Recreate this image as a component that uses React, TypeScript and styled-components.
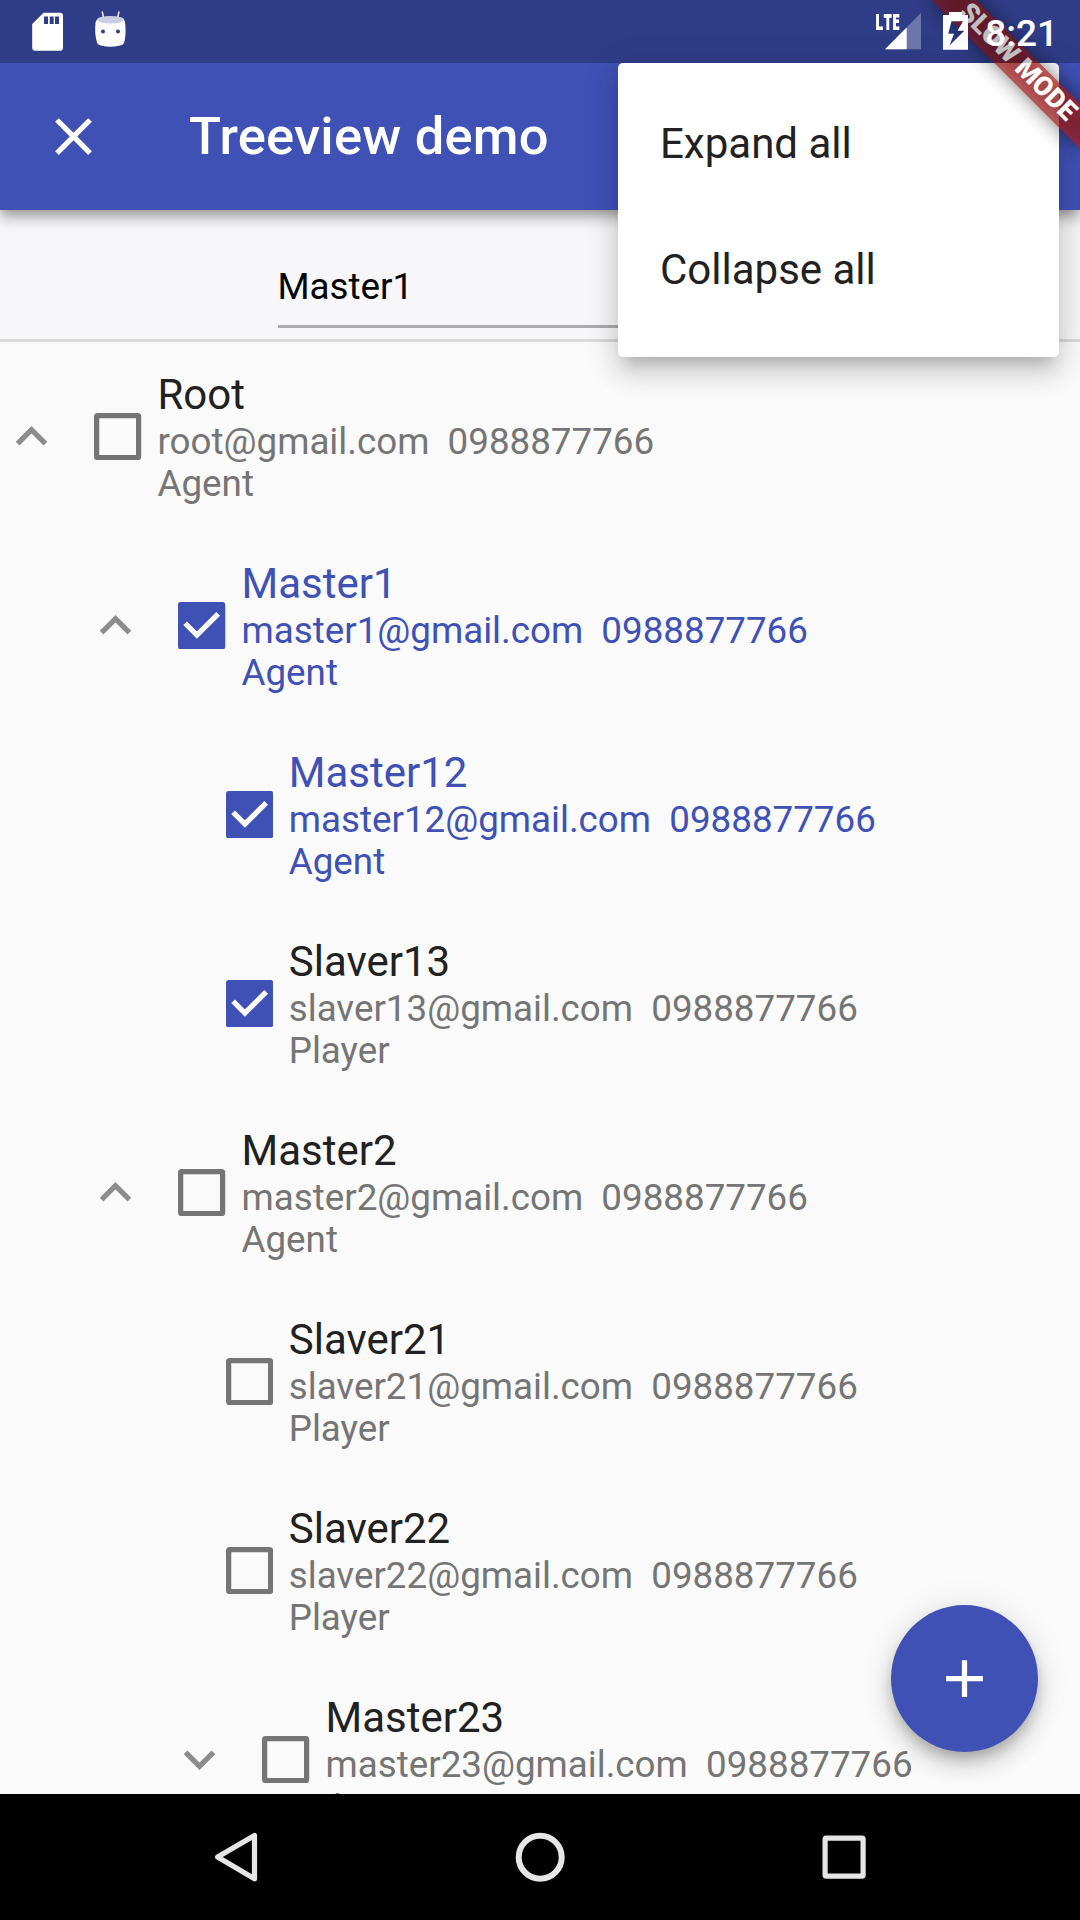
import React from "react";
import styled, { createGlobalStyle } from "styled-components";

const indigo = "#3f51b5";

const GlobalStyle = createGlobalStyle`
  *, *::before, *::after { box-sizing: border-box; }
  body {
    margin: 0;
    background: #000;
    font-family: Roboto, "Liberation Sans", sans-serif;
  }
`;

const Screen = styled.div`
  position: relative;
  display: flex;
  flex-direction: column;
  width: 1080px;
  height: 1920px;
  overflow: hidden;
  background: #fafafa;
`;

const Header = styled.header`
  position: relative;
  z-index: 1;
  flex: none;
  height: 210px;
  padding-top: 63px;
  background: ${indigo};
  box-shadow: 0 5px 10px -2px rgba(0, 0, 0, 0.2), 0 10px 13px rgba(0, 0, 0, 0.16), 0 3px 16px rgba(0, 0, 0, 0.12);
`;

const Toolbar = styled.div`
  display: flex;
  align-items: center;
  height: 147px;
  padding-left: 42px;
`;

const Icon = styled.svg`
  display: block;
  flex: none;
  width: 63px;
  height: 63px;
`;

const Title = styled.h1`
  margin: 0 0 2px 84px;
  color: #fff;
  font-size: 52.5px;
  font-weight: 500;
  letter-spacing: 0.22px;
  line-height: 62px;
`;

const SearchPanel = styled.div`
  display: flex;
  flex: none;
  justify-content: center;
  height: 132px;
  padding-top: 43px;
  background: #f7f7f9;
  border-bottom: 3px solid #dadada;
`;

const SearchField = styled.div`
  width: 525px;
  height: 75px;
  padding-top: 12px;
  border-bottom: 3px solid #acacac;
  color: #000;
  font-size: 36.75px;
  line-height: 43px;
`;

const Tree = styled.main`
  flex: 1;
  min-height: 0;
  overflow: hidden;
`;

const Row = styled.div<{ $depth: number }>`
  display: flex;
  align-items: center;
  height: 189px;
  padding-left: ${(p) => p.$depth * 84}px;
`;

const Toggle = styled.div<{ $leaf: boolean }>`
  flex: none;
  width: ${(p) => (p.$leaf ? 26.25 : 63)}px;
  margin-right: 31.4px;
`;

const CheckIcon = styled.svg`
  display: block;
  flex: none;
  width: 47.25px;
  height: 47.25px;
  margin-right: 15.85px;
`;

const Details = styled.div<{ $active: boolean }>`
  display: flex;
  flex-direction: column;
  padding-top: 2px;
  color: ${(p) => (p.$active ? indigo : "#757575")};
  font-size: 36.75px;
  line-height: 42px;
  white-space: pre;
`;

const Name = styled.div<{ $active: boolean }>`
  margin-bottom: 1px;
  color: ${(p) => (p.$active ? indigo : "#212121")};
  font-size: 42px;
  line-height: 50px;
`;

const NavBar = styled.nav`
  position: relative;
  display: flex;
  flex: none;
  align-items: center;
  justify-content: center;
  gap: 241px;
  height: 126px;
  background: #000;
`;

const Fab = styled.button`
  position: absolute;
  right: 42px;
  bottom: 168px;
  display: flex;
  align-items: center;
  justify-content: center;
  width: 147px;
  height: 147px;
  padding: 0;
  border: 0;
  border-radius: 50%;
  background: ${indigo};
  box-shadow: 0 8px 13px -3px rgba(0, 0, 0, 0.2), 0 14px 22px rgba(0, 0, 0, 0.14), 0 3px 34px rgba(0, 0, 0, 0.1);
`;

const Menu = styled.div`
  position: absolute;
  z-index: 2;
  top: 63px;
  right: 21px;
  width: 441px;
  height: 294px;
  padding: 18px 42px 24px;
  border-radius: 5px;
  background: #fff;
  box-shadow: 0 13px 13px -8px rgba(0, 0, 0, 0.16), 0 16px 26px 2px rgba(0, 0, 0, 0.12), 0 6px 36px 4px rgba(0, 0, 0, 0.09);
`;

const MenuItem = styled.div`
  height: 126px;
  color: #212121;
  font-size: 42px;
  line-height: 126px;
`;

const Ribbon = styled.div`
  position: absolute;
  z-index: 3;
  top: 47.35px;
  left: 911.9px;
  width: 210px;
  height: 31.5px;
  transform: rotate(45deg);
`;

const RibbonShadow = styled.div`
  position: absolute;
  inset: 0;
  background: rgba(0, 0, 0, 0.5);
  filter: blur(10px);
`;

const RibbonLabel = styled.div`
  position: absolute;
  inset: 0;
  background: rgba(183, 28, 28, 0.627);
  color: #fff;
  font-size: 26.8px;
  font-weight: 900;
  line-height: 28px;
  text-align: center;
  white-space: nowrap;
`;

const StatusBar = styled.div`
  position: absolute;
  z-index: 4;
  top: 0;
  left: 0;
  display: flex;
  justify-content: space-between;
  width: 1080px;
  height: 63px;
  padding: 0 22px 0 24px;
  background: rgba(0, 0, 0, 0.25);
`;

const StatusGroup = styled.div`
  display: flex;
  align-items: flex-start;
`;

const StatusIcon = styled.svg<{ $w: number }>`
  display: block;
  flex: none;
  width: ${(p) => p.$w}px;
  height: 63px;
`;

const NetworkType = styled.span`
  width: 10px;
  margin-top: 10px;
  color: #fff;
  font-family: "Open Sans", Roboto, sans-serif;
  font-size: 23px;
  font-weight: 800;
  line-height: 22px;
  transform: scaleX(0.63);
  transform-origin: left;
`;

const Clock = styled.span`
  margin-left: 17px;
  color: #fff;
  font-size: 37px;
  font-weight: 500;
  line-height: 68px;
`;

type Node = {
  name: string;
  role: string;
  depth: number;
  toggle?: "open" | "closed";
  checked?: boolean;
  active?: boolean;
};

const nodes: Node[] = [
  { name: "Root", role: "Agent", depth: 0, toggle: "open" },
  { name: "Master1", role: "Agent", depth: 1, toggle: "open", checked: true, active: true },
  { name: "Master12", role: "Agent", depth: 2, checked: true, active: true },
  { name: "Slaver13", role: "Player", depth: 2, checked: true },
  { name: "Master2", role: "Agent", depth: 1, toggle: "open" },
  { name: "Slaver21", role: "Player", depth: 2 },
  { name: "Slaver22", role: "Player", depth: 2 },
  { name: "Master23", role: "Agent", depth: 2, toggle: "closed" },
];

function Checkbox({ checked }: { checked?: boolean }) {
  return (
    <CheckIcon viewBox="0 0 18 18">
      {checked ? (
        <>
          <rect width="18" height="18" rx="1" fill={indigo} />
          <path d="M2.7 8.1 7.2 12.6 15.3 4.5" fill="none" stroke="#fff" strokeWidth="2" />
        </>
      ) : (
        <rect x="1" y="1" width="16" height="16" rx="0.4" fill="none" stroke="#757575" strokeWidth="2" />
      )}
    </CheckIcon>
  );
}

function TreeRow({ node }: { node: Node }) {
  const active = !!node.active;
  return (
    <Row $depth={node.depth}>
      <Toggle $leaf={!node.toggle}>
        {node.toggle && (
          <Icon viewBox="0 0 24 24" fill="#8c8c8c">
            {node.toggle === "open" ? (
              <path d="M12 8l-6 6 1.41 1.41L12 10.83l4.59 4.58L18 14z" />
            ) : (
              <path d="M16.59 8.59L12 13.17 7.41 8.59 6 10l6 6 6-6z" />
            )}
          </Icon>
        )}
      </Toggle>
      <Checkbox checked={node.checked} />
      <Details $active={active}>
        <Name $active={active}>{node.name}</Name>
        <div>{`${node.name.toLowerCase()}@gmail.com  0988877766`}</div>
        <div>{node.role}</div>
      </Details>
    </Row>
  );
}

export default function App() {
  return (
    <Screen>
      <GlobalStyle />
      <Header>
        <Toolbar>
          <Icon viewBox="0 0 24 24" fill="#fff">
            <path d="M19 6.41L17.59 5 12 10.59 6.41 5 5 6.41 10.59 12 5 17.59 6.41 19 12 13.41 17.59 19 19 17.59 13.41 12z" />
          </Icon>
          <Title>Treeview demo</Title>
        </Toolbar>
      </Header>
      <SearchPanel>
        <SearchField>Master1</SearchField>
      </SearchPanel>
      <Tree>
        {nodes.map((node) => (
          <TreeRow key={node.name} node={node} />
        ))}
      </Tree>
      <Fab>
        <Icon viewBox="0 0 24 24" fill="#fff">
          <path d="M19 13h-6v6h-2v-6H5v-2h6V5h2v6h6v2z" />
        </Icon>
      </Fab>
      <NavBar>
        <Icon viewBox="0 0 63 63" fill="none" stroke="#e6e6e6" strokeWidth="5.2" strokeLinejoin="round">
          <path d="M49.5 9.4V52.8L12.6 31.1z" />
        </Icon>
        <Icon viewBox="0 0 63 63" fill="none" stroke="#e6e6e6" strokeWidth="6">
          <circle cx="31.2" cy="31.2" r="21.5" />
        </Icon>
        <Icon viewBox="0 0 63 63" fill="none" stroke="#e6e6e6" strokeWidth="5.2" strokeLinejoin="round">
          <rect x="12.1" y="12.1" width="38" height="38" rx="1" />
        </Icon>
      </NavBar>
      <Menu>
        <MenuItem>Expand all</MenuItem>
        <MenuItem>Collapse all</MenuItem>
      </Menu>
      <Ribbon>
        <RibbonShadow />
        <RibbonLabel>SLOW MODE</RibbonLabel>
      </Ribbon>
      <StatusBar>
        <StatusGroup>
          <StatusIcon $w={63} viewBox="0 0 63 63" fill="#fff">
            <path
              fillRule="evenodd"
              d="M19.5 12.7H36a3 3 0 0 1 3 3v32a3 3 0 0 1-3 3H11.2a3 3 0 0 1-3-3V24zM20 16.5V24h4v-7.5zM25.7 16.5V24h4v-7.5zM31 16.5V24h4v-7.5z"
            />
          </StatusIcon>
          <StatusIcon $w={63} viewBox="0 0 63 63" fill="#fff">
            <path d="M15.2 11.5 16.8 19M32 11.5 30.4 19" stroke="#fff" strokeWidth="1.4" />
            <path d="M8.6 22Q10 18.8 12 17.8H35.4Q37.4 19 38 22 39.5 33 37.2 42.5 36.3 45.2 32 45.8 23.5 47.6 15 45.8 11 45.2 10 42.5 7.2 33 8.6 22z" />
            <ellipse cx="23.5" cy="19.7" rx="13.1" ry="3.8" fill="#cacde3" />
            <circle cx="16" cy="31.5" r="2" fill="#303c87" />
            <circle cx="31" cy="31.5" r="2" fill="#303c87" />
          </StatusIcon>
        </StatusGroup>
        <StatusGroup>
          <NetworkType>LTE</NetworkType>
          <StatusIcon $w={36} viewBox="0 0 36 63" fill="#fff">
            <path d="M0 49.2 36 13V49.2z" opacity="0.3" />
            <path d="M0 49.2 21.7 27.4V49.2z" />
          </StatusIcon>
          <StatusIcon $w={47} viewBox="0 0 47 63">
            <path
              fill="#fff"
              fillRule="evenodd"
              d="M22 15H28V12H41V15H47V49.8H22zM30.5 21.3 27.2 33.8H33L28.5 45.6 43.3 30.8H36.5L42 21.3z"
            />
          </StatusIcon>
          <Clock>8:21</Clock>
        </StatusGroup>
      </StatusBar>
    </Screen>
  );
}
